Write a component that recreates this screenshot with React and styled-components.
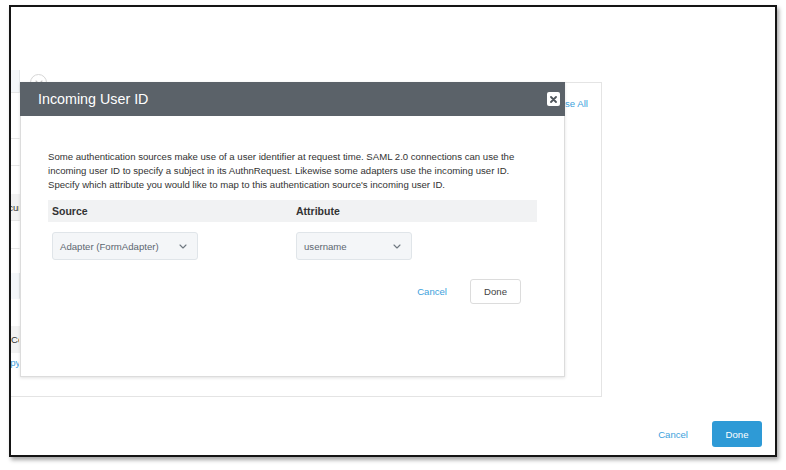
import React from 'react';
import styled, { createGlobalStyle } from 'styled-components';

const GlobalStyle = createGlobalStyle`
  html, body {
    margin: 0;
    padding: 0;
    background: #ffffff;
  }
  body {
    font-family: "Liberation Sans", Arial, Helvetica, sans-serif;
    color: #333;
  }
  * {
    box-sizing: border-box;
  }
`;

const Screen = styled.div`
  width: 786px;
  height: 470px;
  padding: 5px 0 0 9px;
  background: #ffffff;
`;

const Frame = styled.div`
  position: relative;
  width: 768px;
  height: 452px;
  border: 2px solid #151515;
  box-shadow: 2px 3px 4px rgba(0, 0, 0, 0.35);
  background: #ffffff;
  overflow: hidden;
  display: flex;
  flex-direction: column;
`;

const Page = styled.div`
  display: flex;
  flex-direction: column;
  padding-top: 75px;
`;

const Card = styled.div`
  position: relative;
  width: 591px;
  height: 315px;
  border: 1px solid #e4e4e4;
  border-left: none;
  display: grid;
  grid-template-columns: 9px 1fr;
`;

const Toggle = styled.span`
  position: absolute;
  left: 19px;
  top: -9px;
  width: 17px;
  height: 17px;
  border: 1px solid #d6d6d6;
  border-radius: 50%;
  background: #fff;
  display: flex;
  align-items: center;
  justify-content: center;
`;

const SideList = styled.div`
  display: flex;
  flex-direction: column;
  margin-top: -13px;
`;

const SideRow = styled.div`
  height: ${(p) => p.$h}px;
  display: flex;
  align-items: center;
  font-size: 9.6px;
  white-space: nowrap;
  overflow: hidden;
  color: ${(p) => (p.$link ? '#3d9fdc' : '#333')};
  background: ${(p) =>
    p.$tone === 'blue' ? '#f4f7fa' : p.$tone === 'gray' ? '#f2f2f2' : 'transparent'};
  border-bottom: 1px solid ${(p) => (p.$line ? '#e6e6e6' : 'transparent')};
  border-right: 1px solid ${(p) => (p.$tone === 'blue' ? '#e3e7ea' : 'transparent')};
`;

const SideLabel = styled.span`
  margin-left: ${(p) => p.$shift || 0}px;
`;

const CardTools = styled.div`
  display: flex;
  justify-content: flex-end;
  align-items: flex-start;
  padding: 15px 13px 0 0;
`;

const ToolLink = styled.a`
  font-size: 9.6px;
  color: #3d9fdc;
  text-decoration: none;
`;

const Footer = styled.div`
  display: flex;
  justify-content: flex-end;
  align-items: center;
  gap: 24px;
  margin-top: 24px;
  padding-right: 13px;
`;

const LinkButton = styled.button`
  border: none;
  background: none;
  padding: 0;
  font-family: inherit;
  font-size: 9.6px;
  color: #3d9fdc;
  cursor: pointer;
`;

const PrimaryButton = styled.button`
  width: 50px;
  height: 26px;
  border: none;
  border-radius: 3px;
  background: #2e9ad6;
  color: #fff;
  font-family: inherit;
  font-size: 9.6px;
  cursor: pointer;
`;

const Modal = styled.div`
  position: absolute;
  left: 9px;
  top: 75px;
  width: 545px;
  height: 295px;
  background: #fff;
  border: 1px solid #dcdcdc;
  box-shadow: 0 1px 3px rgba(0, 0, 0, 0.12);
  display: flex;
  flex-direction: column;
`;

const ModalHeader = styled.div`
  height: 34px;
  margin: -1px -1px 0 -1px;
  background: #5b6269;
  display: flex;
  align-items: center;
  justify-content: space-between;
  padding: 0 5px 0 18px;
`;

const ModalTitle = styled.h2`
  margin: 0;
  font-size: 14.3px;
  font-weight: normal;
  color: #fff;
`;

const CloseButton = styled.button`
  width: 13px;
  height: 14px;
  padding: 0;
  border: none;
  border-radius: 2px;
  background: #fff;
  display: flex;
  align-items: center;
  justify-content: center;
  cursor: pointer;
`;

const ModalBody = styled.div`
  padding: 34px 27px 0 27px;
`;

const Intro = styled.p`
  margin: 0;
  font-size: 9.6px;
  line-height: 14px;
  color: #333;
`;

const Table = styled.div`
  margin-top: 8px;
`;

const HeadRow = styled.div`
  display: grid;
  grid-template-columns: 244px 1fr;
  height: 22px;
  align-items: center;
  background: #f1f2f3;
`;

const HeadCell = styled.div`
  padding-left: 4px;
  font-size: 10.5px;
  font-weight: bold;
  color: #333;
`;

const ValueRow = styled.div`
  display: grid;
  grid-template-columns: 244px 1fr;
  padding-top: 10px;
`;

const ValueCell = styled.div`
  padding-left: 4px;
`;

const Select = styled.div`
  width: ${(p) => p.$w}px;
  height: 28px;
  padding: 0 10px 0 7px;
  display: flex;
  align-items: center;
  justify-content: space-between;
  background: #f4f6f8;
  border: 1px solid #e0e5e9;
  border-radius: 3px;
  font-size: 9.6px;
  color: #5c6670;
`;

const Actions = styled.div`
  display: flex;
  justify-content: flex-end;
  align-items: center;
  gap: 23px;
  margin-top: 19px;
  padding-right: 16px;
`;

const GhostButton = styled.button`
  width: 51px;
  height: 25px;
  border: 1px solid #dcdcdc;
  border-radius: 3px;
  background: #fff;
  color: #444;
  font-family: inherit;
  font-size: 9.6px;
  cursor: pointer;
`;

const Chevron = ({ color = '#6f7880' }) => (
  <svg width="8" height="5" viewBox="0 0 8 5" fill="none">
    <path d="M1 1l3 3 3-3" stroke={color} strokeWidth="1.1" strokeLinecap="round" strokeLinejoin="round" />
  </svg>
);

const CloseIcon = () => (
  <svg width="7" height="7" viewBox="0 0 7 7">
    <path d="M1 1l5 5M6 1L1 6" stroke="#4f555b" strokeWidth="1.8" strokeLinecap="round" />
  </svg>
);

const sideRows = [
  { h: 23, tone: 'blue', line: true },
  { h: 46, line: true },
  { h: 27, line: true },
  { h: 28 },
  { h: 27, tone: 'gray', line: true, label: 'Accuracy', shift: -14 },
  { h: 28, line: true },
  { h: 24 },
  { h: 26, tone: 'blue' },
  { h: 27 },
  { h: 27, tone: 'gray', label: 'Contract' },
  { h: 20, link: true, label: 'Copy', shift: -13 },
];

export default function App() {
  return (
    <Screen>
      <GlobalStyle />
      <Frame>
        <Page>
          <Card>
            <Toggle>
              <Chevron color="#c4c4c4" />
            </Toggle>
            <SideList>
              {sideRows.map((r, i) => (
                <SideRow key={i} $h={r.h} $tone={r.tone} $line={r.line} $link={r.link}>
                  {r.label && <SideLabel $shift={r.shift}>{r.label}</SideLabel>}
                </SideRow>
              ))}
            </SideList>
            <CardTools>
              <ToolLink href="#">Collapse All</ToolLink>
            </CardTools>
          </Card>
          <Footer>
            <LinkButton>Cancel</LinkButton>
            <PrimaryButton>Done</PrimaryButton>
          </Footer>
        </Page>

        <Modal>
          <ModalHeader>
            <ModalTitle>Incoming User ID</ModalTitle>
            <CloseButton aria-label="Close">
              <CloseIcon />
            </CloseButton>
          </ModalHeader>
          <ModalBody>
            <Intro>
              Some authentication sources make use of a user identifier at request time. SAML 2.0 connections can use the
              <br />
              incoming user ID to specify a subject in its AuthnRequest. Likewise some adapters use the incoming user ID.
              <br />
              Specify which attribute you would like to map to this authentication source's incoming user ID.
            </Intro>
            <Table>
              <HeadRow>
                <HeadCell>Source</HeadCell>
                <HeadCell>Attribute</HeadCell>
              </HeadRow>
              <ValueRow>
                <ValueCell>
                  <Select $w={146}>
                    <span>Adapter (FormAdapter)</span>
                    <Chevron />
                  </Select>
                </ValueCell>
                <ValueCell>
                  <Select $w={116}>
                    <span>username</span>
                    <Chevron />
                  </Select>
                </ValueCell>
              </ValueRow>
            </Table>
            <Actions>
              <LinkButton>Cancel</LinkButton>
              <GhostButton>Done</GhostButton>
            </Actions>
          </ModalBody>
        </Modal>
      </Frame>
    </Screen>
  );
}
